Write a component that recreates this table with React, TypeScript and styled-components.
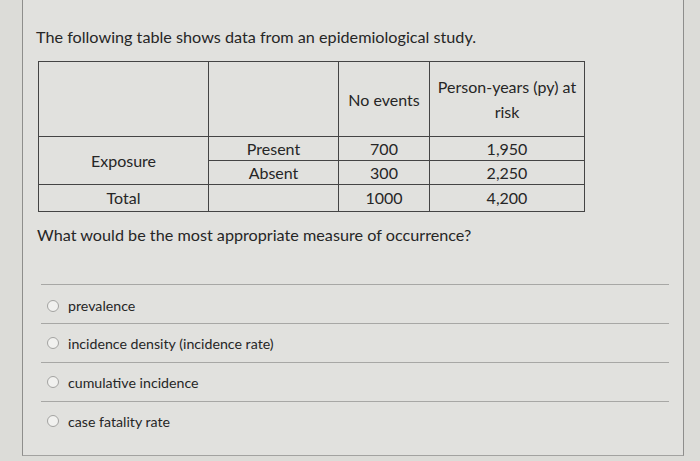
import React from "react";
import styled, { createGlobalStyle } from "styled-components";

const GlobalStyle = createGlobalStyle`
  html, body {
    margin: 0;
    padding: 0;
    background: #dcdcd8;
  }
  body {
    font-family: Lato, "Open Sans", "Liberation Sans", sans-serif;
    color: #262626;
  }
`

const Panel = styled.div`
  box-sizing: border-box;
  margin-left: 22px;
  width: 662px;
  height: 456px;
  padding: 26px 0 0 13px;
  background: #e1e1de;
  border-left: 1px solid #8e8e8c;
  border-right: 1px solid #8e8e8c;
  border-bottom: 1px solid #a2a2a0;
`

const Intro = styled.p`
  margin: 0;
  font-size: 16.2px;
  line-height: 22px;
`

const DataTable = styled.table`
  margin: 13px 0 0 2px;
  border-collapse: collapse;
  border: 1.5px solid #444;
  font-size: 16px;
  td {
    border: 1px solid #444;
    text-align: center;
    vertical-align: middle;
    padding: 0 6px;
    height: 23px;
    line-height: 20px;
  }
`

const Col = styled.col<{ $w: number }>`
  width: ${p => p.$w}px;
`

const HeadRow = styled.tr`
  td {
    height: 74px;
    line-height: 25px;
  }
`

const TotalRow = styled.tr`
  td {
    height: 26px;
  }
`

const Question = styled.p`
  margin: 12px 0 0 1px;
  font-size: 16.2px;
  line-height: 22px;
`

const Options = styled.div`
  margin: 38px 0 0 5px;
  width: 628px;
`

const Option = styled.label<{ $first?: boolean }>`
  display: flex;
  align-items: center;
  gap: 9px;
  height: 39px;
  padding: ${p => (p.$first ? "3px" : "0")} 0 0 6px;
  border-top: 1px solid #a7a7a5;
  font-size: 14.2px;
  box-sizing: border-box;
`

const Radio = styled.span`
  width: 10px;
  height: 10px;
  border-radius: 50%;
  border: 1.5px solid #a3a3a1;
  background: #f1f1ef;
  flex: none;
`

const columns = [170, 130, 91, 155]

const options = [
  "prevalence",
  "incidence density (incidence rate)",
  "cumulative incidence",
  "case fatality rate",
]

export default function App() {
  return (
    <>
      <GlobalStyle />
      <Panel>
        <Intro>The following table shows data from an epidemiological study.</Intro>
        <DataTable>
          <colgroup>
            {columns.map((w, i) => <Col key={i} $w={w} />)}
          </colgroup>
          <tbody>
            <HeadRow>
              <td></td>
              <td></td>
              <td>No events</td>
              <td>Person-years (py) at risk</td>
            </HeadRow>
            <tr>
              <td rowSpan={2}>Exposure</td>
              <td>Present</td>
              <td>700</td>
              <td>1,950</td>
            </tr>
            <tr>
              <td>Absent</td>
              <td>300</td>
              <td>2,250</td>
            </tr>
            <TotalRow>
              <td>Total</td>
              <td></td>
              <td>1000</td>
              <td>4,200</td>
            </TotalRow>
          </tbody>
        </DataTable>
        <Question>What would be the most appropriate measure of occurrence?</Question>
        <Options>
          {options.map((o, i) => (
            <Option key={o} $first={i === 0}>
              <Radio />
              {o}
            </Option>
          ))}
        </Options>
      </Panel>
    </>
  );
}
